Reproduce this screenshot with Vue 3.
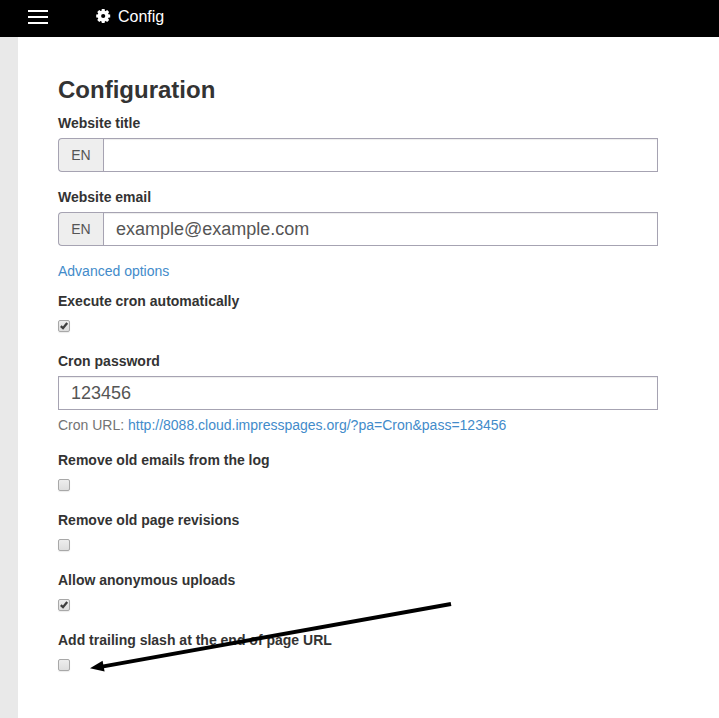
<script setup>
import { ref } from 'vue'

const title = ref('')
const email = ref('example@example.com')
const password = ref('123456')
const cron = ref(true)
const options = ref([
  { label: 'Remove old emails from the log', on: false },
  { label: 'Remove old page revisions', on: false },
  { label: 'Allow anonymous uploads', on: true },
  { label: 'Add trailing slash at the end of page URL', on: false },
])
const teeth = [0, 45, 90, 135]
</script>

<template>
  <div class="page">
    <header class="navbar">
      <div class="burger"><i></i><i></i><i></i></div>
      <svg class="cog" width="14" height="14" viewBox="0 0 14 14">
        <circle cx="7.2" cy="7" r="3.8" fill="none" stroke="#fff" stroke-width="3.4" />
        <g v-for="a in teeth" :key="a" :transform="`rotate(${a} 7.2 7)`" fill="#fff">
          <path d="M5.8 0h2.8l.4 2.6H5.4zM5.8 14h2.8l.4-2.6H5.4z" />
        </g>
      </svg>
      <span class="module">Config</span>
    </header>
    <div class="body">
      <aside class="side"></aside>
      <main class="content">
        <h1>Configuration</h1>
        <div class="group">
          <label>Website title</label>
          <div class="field"><span class="addon">EN</span><input v-model="title" type="text" /></div>
        </div>
        <div class="group">
          <label>Website email</label>
          <div class="field"><span class="addon">EN</span><input v-model="email" type="text" /></div>
        </div>
        <div class="advanced"><a>Advanced options</a></div>
        <div class="group">
          <label>Execute cron automatically</label>
          <div class="check-row">
            <span class="check" @click="cron = !cron">
              <svg v-if="cron" width="10" height="10" viewBox="0 0 10 10"><path d="M1.8 5.2L4 7.2L8.2 2" /></svg>
            </span>
          </div>
        </div>
        <div class="group">
          <label>Cron password</label>
          <div class="field"><input v-model="password" type="text" /></div>
          <p class="help">Cron URL: <a>http://8088.cloud.impresspages.org/?pa=Cron&amp;pass=123456</a></p>
        </div>
        <div v-for="o in options" :key="o.label" class="group">
          <label>{{ o.label }}</label>
          <div class="check-row">
            <span class="check" @click="o.on = !o.on">
              <svg v-if="o.on" width="10" height="10" viewBox="0 0 10 10"><path d="M1.8 5.2L4 7.2L8.2 2" /></svg>
            </span>
          </div>
        </div>
      </main>
    </div>
    <svg class="arrow" width="364" height="72" viewBox="88 602 364 72">
      <path d="M451 604L102 666.6" stroke="#000" stroke-width="4" />
      <path d="M90 668.3L102.6 660.7L104.6 671.5Z" fill="#000" />
    </svg>
  </div>
</template>

<style>
body {
  margin: 0;
  background: #fff;
}
</style>

<style scoped>
.page {
  position: relative;
  height: 718px;
  overflow: hidden;
  display: flex;
  flex-direction: column;
  font: 14px/20px "Liberation Sans", Arial, sans-serif;
  color: #333;
}
.navbar {
  height: 37px;
  flex: none;
  background: #000;
  color: #fff;
  display: flex;
  align-items: flex-start;
  box-sizing: border-box;
  padding: 9px 28px 0;
}
.burger {
  width: 20px;
  margin: 1px 48px 0 0;
  display: flex;
  flex-direction: column;
  gap: 4px;
}
.burger i {
  height: 2px;
  background: #fff;
}
.cog {
  margin-right: 8px;
  overflow: visible;
}
.module {
  font-size: 16px;
  line-height: 16px;
}
.body {
  flex: 1;
  display: flex;
}
.side {
  width: 18px;
  background: #e9e9e9;
}
.content {
  width: 600px;
  padding: 40px 0 0 40px;
}
h1 {
  margin: 0 0 10px;
  font-size: 24px;
  line-height: 26px;
  font-weight: bold;
}
.group {
  margin-bottom: 15px;
}
label {
  display: block;
  margin-bottom: 5px;
  font-weight: bold;
}
.field {
  display: flex;
  height: 34px;
}
.addon {
  box-sizing: border-box;
  width: 45px;
  border: 1px solid #a6a3b2;
  border-right: 0;
  border-radius: 4px 0 0 4px;
  background: #eee;
  color: #555;
  line-height: 32px;
  text-align: center;
}
input {
  flex: 1;
  min-width: 0;
  box-sizing: border-box;
  margin: 0;
  padding: 0 12px;
  border: 1px solid #a6a3b2;
  border-radius: 0;
  background: #fff;
  box-shadow: inset 0 1px 1px rgba(0, 0, 0, 0.075);
  color: #555;
  font: 18px "Liberation Sans", Arial, sans-serif;
  outline: 0;
}
a {
  color: #428bca;
}
.advanced {
  margin-bottom: 10px;
}
.help {
  margin: 5px 0 0;
  color: #737373;
}
.check-row {
  height: 20px;
  padding-top: 4px;
  box-sizing: border-box;
}
.check {
  display: block;
  width: 12px;
  height: 12px;
  box-sizing: border-box;
  border: 1px solid #a8a8a8;
  border-radius: 2px;
  background: linear-gradient(#ededed, #dedede);
  box-shadow: 0 1px 1px rgba(0, 0, 0, 0.08);
}
.check svg {
  display: block;
}
.check path {
  fill: none;
  stroke: #3f3f3f;
  stroke-width: 2.3;
}
.arrow {
  position: absolute;
  left: 88px;
  top: 602px;
}
</style>
